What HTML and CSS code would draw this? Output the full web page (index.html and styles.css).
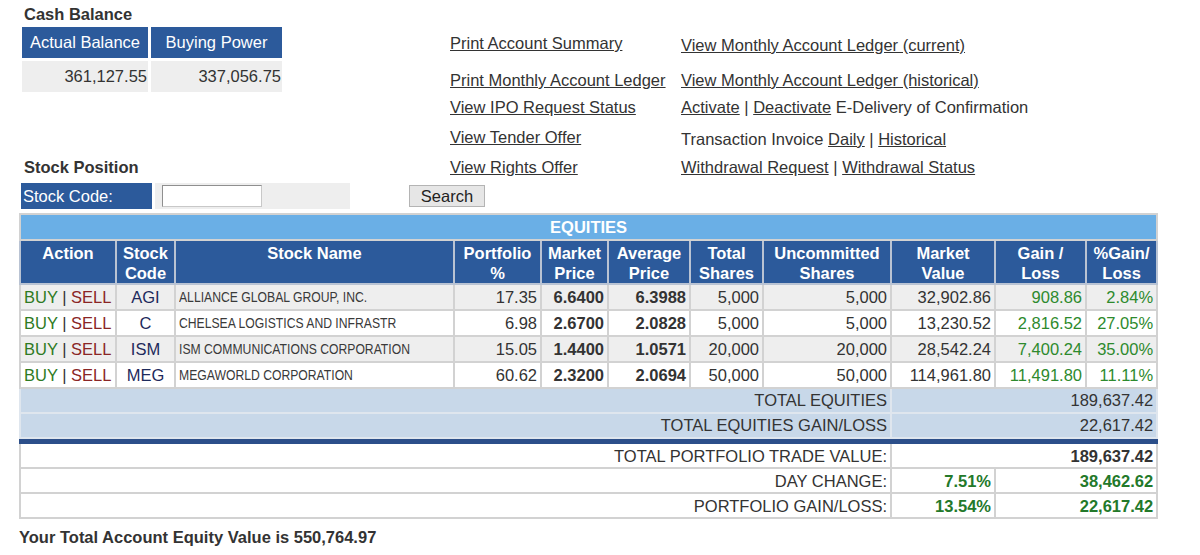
FILE: index.html
```html
<!DOCTYPE html>
<html lang="en">
  <head>
    <meta charset="UTF-8" />
    <meta name="viewport" content="width=device-width, initial-scale=1.0" />
    <title>Account Summary</title>
    <link rel="stylesheet" href="styles.css">
  </head>
  <body>
    <div class="page">
      <div class="top">
        <div class="left-block">
          <h2>Cash Balance</h2>
          <table class="balance">
            <tr>
              <th>Actual Balance</th>
              <th>Buying Power</th>
            </tr>
            <tr>
              <td>361,127.55</td>
              <td>337,056.75</td>
            </tr>
          </table>
          <h2 class="position-title">Stock Position</h2>
        </div>
        <div class="links">
          <div><a href="#">Print Account Summary</a></div>
          <div class="nudge"><a href="#">View Monthly Account Ledger (current)</a></div>
          <div><a href="#">Print Monthly Account Ledger</a></div>
          <div><a href="#">View Monthly Account Ledger (historical)</a></div>
          <div><a href="#">View IPO Request Status</a></div>
          <div><a href="#">Activate</a> | <a href="#">Deactivate</a> E-Delivery of Confirmation</div>
          <div><a href="#">View Tender Offer</a></div>
          <div class="nudge">Transaction Invoice <a href="#">Daily</a> | <a href="#">Historical</a></div>
          <div><a href="#">View Rights Offer</a></div>
          <div><a href="#">Withdrawal Request</a> | <a href="#">Withdrawal Status</a></div>
        </div>
      </div>

      <div class="search-row">
        <div class="code-label">Stock Code:</div>
        <div class="code-field"><input type="text" class="code-input" /></div>
        <button class="search-button">Search</button>
      </div>

      <table class="equities">
        <colgroup>
          <col style="width: 96px" />
          <col style="width: 59px" />
          <col style="width: 279px" />
          <col style="width: 87px" />
          <col style="width: 67px" />
          <col style="width: 82px" />
          <col style="width: 73px" />
          <col style="width: 128px" />
          <col style="width: 104px" />
          <col style="width: 91px" />
          <col style="width: 71px" />
        </colgroup>
        <tr class="caption-row">
          <td colspan="11">EQUITIES</td>
        </tr>
        <tr class="head-row">
          <th>Action</th>
          <th>Stock<br />Code</th>
          <th>Stock Name</th>
          <th>Portfolio<br />%</th>
          <th>Market<br />Price</th>
          <th>Average<br />Price</th>
          <th>Total<br />Shares</th>
          <th>Uncommitted<br />Shares</th>
          <th>Market<br />Value</th>
          <th>Gain /<br />Loss</th>
          <th>%Gain/<br />Loss</th>
        </tr>
        <tr class="odd">
          <td class="action"><a class="buy" href="#">BUY</a> | <a class="sell" href="#">SELL</a></td>
          <td class="code">AGI</td>
          <td class="name"><span>ALLIANCE GLOBAL GROUP, INC.</span></td>
          <td class="num">17.35</td>
          <td class="num bold">6.6400</td>
          <td class="num bold">6.3988</td>
          <td class="num">5,000</td>
          <td class="num">5,000</td>
          <td class="num">32,902.86</td>
          <td class="num gain">908.86</td>
          <td class="num gain">2.84%</td>
        </tr>
        <tr>
          <td class="action"><a class="buy" href="#">BUY</a> | <a class="sell" href="#">SELL</a></td>
          <td class="code">C</td>
          <td class="name"><span>CHELSEA LOGISTICS AND INFRASTR</span></td>
          <td class="num">6.98</td>
          <td class="num bold">2.6700</td>
          <td class="num bold">2.0828</td>
          <td class="num">5,000</td>
          <td class="num">5,000</td>
          <td class="num">13,230.52</td>
          <td class="num gain">2,816.52</td>
          <td class="num gain">27.05%</td>
        </tr>
        <tr class="odd">
          <td class="action"><a class="buy" href="#">BUY</a> | <a class="sell" href="#">SELL</a></td>
          <td class="code">ISM</td>
          <td class="name"><span>ISM COMMUNICATIONS CORPORATION</span></td>
          <td class="num">15.05</td>
          <td class="num bold">1.4400</td>
          <td class="num bold">1.0571</td>
          <td class="num">20,000</td>
          <td class="num">20,000</td>
          <td class="num">28,542.24</td>
          <td class="num gain">7,400.24</td>
          <td class="num gain">35.00%</td>
        </tr>
        <tr>
          <td class="action"><a class="buy" href="#">BUY</a> | <a class="sell" href="#">SELL</a></td>
          <td class="code">MEG</td>
          <td class="name"><span>MEGAWORLD CORPORATION</span></td>
          <td class="num">60.62</td>
          <td class="num bold">2.3200</td>
          <td class="num bold">2.0694</td>
          <td class="num">50,000</td>
          <td class="num">50,000</td>
          <td class="num">114,961.80</td>
          <td class="num gain">11,491.80</td>
          <td class="num gain">11.11%</td>
        </tr>
        <tr class="total-row">
          <td colspan="8" class="num">TOTAL EQUITIES</td>
          <td colspan="3" class="num">189,637.42</td>
        </tr>
        <tr class="total-row">
          <td colspan="8" class="num">TOTAL EQUITIES GAIN/LOSS</td>
          <td colspan="3" class="num">22,617.42</td>
        </tr>
        <tr class="divider">
          <td colspan="11"></td>
        </tr>
        <tr class="summary-row">
          <td colspan="8" class="num">TOTAL PORTFOLIO TRADE VALUE:</td>
          <td colspan="3" class="num bold">189,637.42</td>
        </tr>
        <tr class="summary-row">
          <td colspan="8" class="num">DAY CHANGE:</td>
          <td class="num bold gain">7.51%</td>
          <td colspan="2" class="num bold gain">38,462.62</td>
        </tr>
        <tr class="summary-row">
          <td colspan="8" class="num">PORTFOLIO GAIN/LOSS:</td>
          <td class="num bold gain">13.54%</td>
          <td colspan="2" class="num bold gain">22,617.42</td>
        </tr>
      </table>

      <p class="equity-total">Your Total Account Equity Value is 550,764.97</p>
    </div>
  </body>
</html>
```

FILE: styles.css
```css
body {
  margin: 0;
  background-color: #ffffff;
  font-family: "Liberation Sans", Arial, sans-serif;
  font-size: 16.5px;
  color: #333333;
}
.page {
  padding: 4px 0 0 19px;
}
.top {
  display: flex;
}
.left-block {
  width: 431px;
}
h2 {
  margin: 0 0 0 5px;
  font-size: 16.5px;
  line-height: 20px;
  font-weight: bold;
}
.position-title {
  margin-top: 62px;
}
.balance {
  border-spacing: 3px;
}
.balance th {
  width: 123px;
  height: 31px;
  padding: 0 4px;
  background-color: #2c5a9b;
  color: #ffffff;
  font-weight: normal;
  white-space: nowrap;
}
.balance th:first-child {
  width: 116px;
  padding: 0 5px;
}
.balance td {
  height: 31px;
  padding: 0 1px;
  background-color: #eeeeee;
  text-align: right;
}
.links {
  display: grid;
  grid-template-columns: 231px auto;
  grid-template-rows: 37px 27px 30px 30px 20px;
  align-items: start;
  margin-top: 29px;
  line-height: 20px;
}
.links a {
  color: #333333;
}
.nudge {
  padding-top: 2px;
}
.search-row {
  display: flex;
  align-items: center;
  margin-top: 6px;
  height: 26px;
}
.code-label {
  width: 129px;
  height: 26px;
  margin-left: 2px;
  padding-left: 2px;
  line-height: 26px;
  background-color: #2c5a9b;
  color: #ffffff;
}
.code-field {
  width: 188px;
  height: 26px;
  margin-left: 3px;
  padding-left: 7px;
  display: flex;
  align-items: center;
  background-color: #eeeeee;
}
.code-input {
  width: 100px;
  height: 22px;
  box-sizing: border-box;
  border: 1px solid #8f8f8f;
  border-right-color: #c8c8c8;
  border-bottom-color: #c8c8c8;
  padding: 0 3px;
  font-size: 14px;
}
.search-button {
  margin-left: 59px;
  width: 76px;
  height: 22px;
  padding: 0;
  border: 1px solid #b4b4b4;
  background-color: #e6e6e6;
  color: #222222;
  font-family: "Liberation Sans", Arial, sans-serif;
  font-size: 16.5px;
}
.equities {
  width: 1137px;
  margin-top: 4px;
  border-collapse: collapse;
  table-layout: fixed;
  border: 2px solid #cfcfcf;
}
.equities td,
.equities th {
  border: 2px solid #d2d2d2;
  padding: 2px 3px;
  line-height: 20px;
  white-space: nowrap;
  overflow: hidden;
}
.caption-row td {
  background-color: #6aafe6;
  color: #ffffff;
  font-weight: bold;
  text-align: center;
}
.head-row th {
  padding: 2px 3px 0;
  background-color: #2c5a9b;
  color: #ffffff;
  vertical-align: top;
  border-color: #b9c3d3;
}
.odd td {
  background-color: #eeeeee;
}
.action {
  padding-left: 2px;
}
.action a {
  text-decoration: none;
}
.buy {
  color: #2f7a23;
}
.sell {
  color: #8a2525;
}
.code {
  text-align: center;
  color: #1d2a5c;
}
.name span {
  display: inline-block;
  vertical-align: top;
  line-height: 20px;
  font-size: 14.5px;
  color: #3a3a3a;
  transform: scaleX(0.84);
  transform-origin: left center;
}
.num {
  text-align: right;
}
.bold {
  font-weight: bold;
}
.gain {
  color: #2d8a2d;
}
.bold.gain {
  color: #23792a;
}
.total-row td {
  background-color: #c8d8e9;
  border-color: #dfe6ee;
  padding-top: 1px;
  padding-bottom: 2px;
}
.divider td {
  height: 3px;
  padding: 0;
  line-height: 0;
  background-color: #2c4f8a;
  border-color: #2c4f8a;
}
.summary-row td {
  padding-top: 2px;
  padding-bottom: 1px;
}
.equity-total {
  margin: 8px 0 0;
  font-weight: bold;
  line-height: 20px;
}
```
